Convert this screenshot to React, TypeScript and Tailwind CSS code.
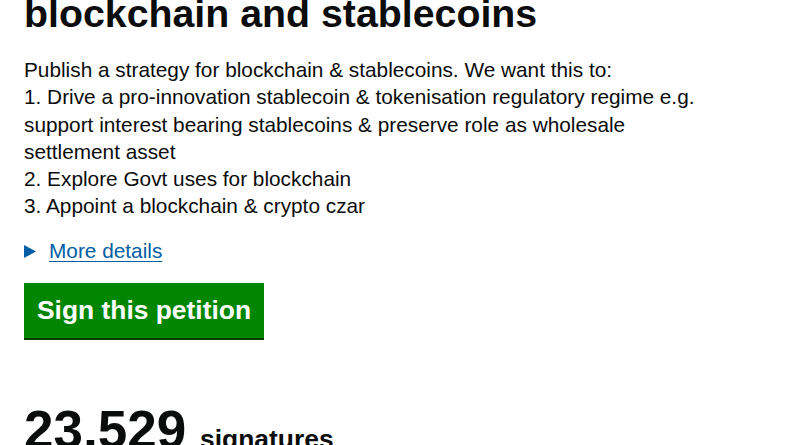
import React from "react";

export default function App() {
  return (
    <div
      className="w-[800px] h-[445px] overflow-hidden bg-white text-[#0b0c0c]"
      style={{ fontFamily: '"Liberation Sans", Arial, sans-serif' }}
    >
      <div className="pl-[24px] pr-[24px]">
        <h1 className="mt-[-6.3px] text-[39.3px] leading-[39.3px] font-bold whitespace-nowrap">
          blockchain and stablecoins
        </h1>
        <div className="mt-[23.3px] text-[20.8px] leading-[27.15px]">
          <p>Publish a strategy for blockchain &amp; stablecoins. We want this to:</p>
          <p>
            1. Drive a pro-innovation stablecoin &amp; tokenisation regulatory regime e.g.
            <br />
            support interest bearing stablecoins &amp; preserve role as wholesale
            <br />
            settlement asset
          </p>
          <p>2. Explore Govt uses for blockchain</p>
          <p>3. Appoint a blockchain &amp; crypto czar</p>
        </div>
        <div className="mt-[18px] flex h-[27px] items-center text-[20.8px] leading-[27.15px]">
          <svg width="12" height="13" viewBox="0 0 12 13" className="mr-[13px] mt-[1px] shrink-0">
            <polygon points="0,0 12,6.5 0,13" fill="#005ea5" />
          </svg>
          <a
            href="#"
            className="text-[#005ea5] underline decoration-1 underline-offset-[3px]"
          >
            More details
          </a>
        </div>
        <div className="mt-[18.5px]">
          <button className="flex h-[55px] w-[240px] items-center justify-center bg-[#008600] text-[26.4px] leading-[26.4px] font-bold text-white shadow-[0_2px_0_#003a00]">
            Sign this petition
          </button>
        </div>
        <div className="mt-[65px] flex items-baseline whitespace-nowrap">
          <span className="text-[53px] leading-[53px] font-bold">23,529</span>
          <span className="ml-[14px] text-[26.4px] font-bold">signatures</span>
        </div>
      </div>
    </div>
  );
}
